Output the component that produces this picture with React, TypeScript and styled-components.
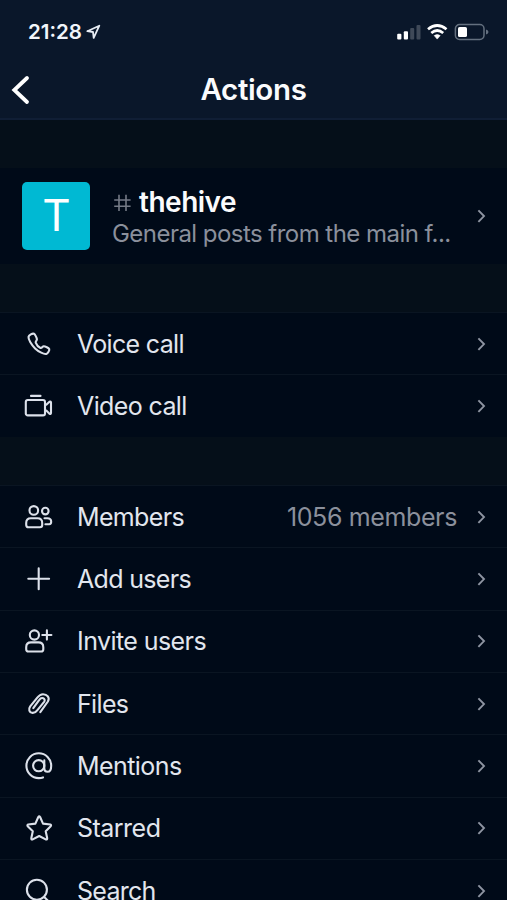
import React from 'react';
import styled, { createGlobalStyle } from 'styled-components';

const GlobalStyle = createGlobalStyle`
  * { box-sizing: border-box; }
  html, body { margin: 0; background: #000a18; }
  body { font-family: Inter, "Liberation Sans", sans-serif; overflow: hidden; }
`;

const Screen = styled.main`
  width: 507px;
  height: 900px;
  overflow: hidden;
  display: flex;
  flex-direction: column;
  background: #000a18;
`;

const Header = styled.header`
  height: 120px;
  flex: none;
  background: #0a172a;
  border-bottom: 2px solid #101e35;
`;

const StatusBar = styled.div`
  height: 60px;
  padding: 4px 18px 0 28px;
  display: flex;
  align-items: center;
  justify-content: space-between;
`;

const Clock = styled.div`
  display: flex;
  align-items: center;
  gap: 4px;
  color: #f2f5fa;
  font-size: 20.5px;
  font-weight: 600;
  letter-spacing: 0;
  line-height: 24px;
`;

const NavBar = styled.div`
  height: 60px;
  padding-left: 10px;
  display: grid;
  grid-template-columns: 22px 1fr 32px;
  align-items: center;
`;

const BackButton = styled.button`
  padding: 0;
  border: 0;
  background: none;
  display: flex;
`;

const Title = styled.h1`
  margin: 0;
  padding-bottom: 2px;
  text-align: center;
  color: #fafbfd;
  font-size: 29.5px;
  font-weight: 600;
  line-height: 36px;
  letter-spacing: -0.35px;
`;

const Spacer = styled.div<{ $height: number }>`
  height: ${(p) => p.$height}px;
  flex: none;
  background: #050f19;
`;

const Profile = styled.section`
  height: 96px;
  flex: none;
  padding: 0 20px 0 22px;
  display: flex;
  align-items: center;
`;

const Avatar = styled.div`
  width: 68px;
  height: 68px;
  flex: none;
  border-radius: 5px;
  background: #00b9d3;
  color: #fff;
  display: flex;
  align-items: center;
  justify-content: center;
  font-size: 44px;
  line-height: 66px;
  padding: 0 0 2px 1px;
`;

const ProfileText = styled.div`
  flex: 1;
  margin-left: 22px;
  padding-top: 4px;
`;

const ChannelName = styled.div`
  display: flex;
  align-items: center;
  gap: 7px;
  height: 32px;
  color: #fafbfd;
  font-size: 28px;
  font-weight: 600;
  letter-spacing: -0.5px;
  line-height: 32px;
`;

const Description = styled.div`
  color: #8b909c;
  font-size: 24px;
  line-height: 32px;
  letter-spacing: -0.54px;
  white-space: nowrap;
`;

const List = styled.ul`
  margin: 0;
  padding: 0;
  list-style: none;
  flex: none;
`;

const Row = styled.li`
  height: 62.3px;
  padding: 0 20px 0 23px;
  display: flex;
  align-items: center;
  border-top: 1px solid #0a1522;
`;

const Label = styled.span<{ $spacing: number }>`
  flex: 1;
  margin-left: 22px;
  color: #e2e6ee;
  font-size: 25px;
  line-height: 32px;
  letter-spacing: ${(p) => p.$spacing}px;
  white-space: nowrap;
`;

const Value = styled.span`
  margin-right: 20px;
  color: #8b909c;
  font-size: 25px;
  line-height: 32px;
  letter-spacing: -0.37px;
`;

const LineIcon = styled.svg`
  width: 32px;
  height: 32px;
  flex: none;
  fill: none;
  stroke: #dce1ea;
  stroke-width: 2.1;
  stroke-linecap: round;
  stroke-linejoin: round;
`;

const ChevronIcon = styled.svg`
  width: 10px;
  height: 16px;
  flex: none;
  fill: none;
  stroke: #8e95a2;
  stroke-width: 1.9;
`;

const Chevron = () => (
  <ChevronIcon viewBox="0 0 10 16">
    <path d="M1.4 2.3 7 8.1 1.4 13.9" />
  </ChevronIcon>
);

const icons = {
  phone: (
    <path d="M11 5.8 C12.1 6.3 13.7 9.7 13.9 11.2 C14 12.6 12.3 13.3 12.7 14.7 C13.4 16.7 15.8 19.2 17.5 20 C18.9 20.5 19.3 18.3 20.8 18.3 C22.3 18.3 25.6 20 26.2 21 C26.7 22.3 24.9 25.4 23.3 25.9 C21.2 26.6 15.6 23.7 12.1 20.4 C8.5 16.9 5.2 11.4 5.5 8.9 C5.8 7 9.5 5.1 11 5.8Z" />
  ),
  video: (
    <>
      <path d="M8 5.9H17.5" />
      <rect x="2.8" y="10" width="19.2" height="15.4" rx="2" />
      <path d="M22 14.8H23.3L26.5 11.7 Q28 11 28 12.6V22.8 Q28 24.4 26.5 23.7L23.3 20.6H22" />
    </>
  ),
  members: (
    <>
      <circle cx="10.8" cy="9.4" r="4.3" />
      <circle cx="22.3" cy="10.1" r="3.3" />
      <path d="M7.8 17.3H14.5Q19.2 17.3 19.2 22V24Q19.2 26.2 17 26.2H5.4Q3.2 26.2 3.2 24V22Q3.2 17.3 7.8 17.3Z" />
      <path d="M21.5 17.3H24.3Q28.2 17.3 28.2 20.8Q28.2 23.2 26.2 23.2H22.4" />
    </>
  ),
  plus: <path d="M5.3 15.8H26.1M15.7 5.4V26.2" />,
  invite: (
    <>
      <circle cx="11.4" cy="10" r="4.6" />
      <path d="M8 17.4H15.4Q20.3 17.4 20.3 22.2V24.2Q20.3 26.5 18 26.5H5.5Q3.2 26.5 3.2 24.2V22.2Q3.2 17.4 8 17.4Z" />
      <path d="M19.3 10H28.4M23.9 5.4V14.6" />
    </>
  ),
  clip: (
    <path d="M17.3 24.1 24.9 13.5C27.1 9.8 24.2 6.2 20 6.2C17.4 6.2 15.8 7.7 14.3 9.6L7.2 18.3C5.3 21 6 24.7 9.6 24.9C12 25 13.3 23.8 14.4 22.2L21.3 13.6C22.7 11.3 20.4 9.3 18.1 10.2C17 10.8 16.4 11.7 15.7 12.6L10.3 20.1" />
  ),
  at: (
    <>
      <circle cx="15.7" cy="15.7" r="5.6" />
      <path d="M21.3 10.4V18C21.3 20.1 22.4 21.8 24.6 21.8C27.3 21.8 28.2 19 28.2 15.7A12.4 12.4 0 1 0 15.8 28.1Q18.1 28.1 20 27.4" />
    </>
  ),
  star: (
    <path d="M15.3 5Q16.2 3.7 17.1 5L20 11.6 27.3 12.5Q28.6 13 27.7 14.2L22.7 19.2 24.2 26.2Q24.2 27.9 22.7 27.4L16.2 24 9.7 27.4Q8.1 27.9 8.3 26.2L9.8 19.2 4.7 14.2Q3.9 13 5.2 12.5L12.4 11.6Z" />
  ),
  search: (
    <>
      <circle cx="13.9" cy="14.7" r="10" />
      <path d="M21.2 22 27.4 28.2" />
    </>
  ),
};

type Item = { icon: keyof typeof icons; label: string; spacing: number; value?: string };

const calls: Item[] = [
  { icon: 'phone', label: 'Voice call', spacing: -0.68 },
  { icon: 'video', label: 'Video call', spacing: -0.62 },
];

const actions: Item[] = [
  { icon: 'members', label: 'Members', spacing: -0.65, value: '1056 members' },
  { icon: 'plus', label: 'Add users', spacing: -0.68 },
  { icon: 'invite', label: 'Invite users', spacing: -0.57 },
  { icon: 'clip', label: 'Files', spacing: -0.65 },
  { icon: 'at', label: 'Mentions', spacing: -0.57 },
  { icon: 'star', label: 'Starred', spacing: -0.52 },
  { icon: 'search', label: 'Search', spacing: -0.72 },
];

const ActionList = ({ items }: { items: Item[] }) => (
  <List>
    {items.map((item) => (
      <Row key={item.label}>
        <LineIcon viewBox="0 0 32 32">{icons[item.icon]}</LineIcon>
        <Label $spacing={item.spacing}>{item.label}</Label>
        {item.value && <Value>{item.value}</Value>}
        <Chevron />
      </Row>
    ))}
  </List>
);

const StatusIcons = () => (
  <svg width="92" height="18" viewBox="0 0 92 18">
    <g fill="#fff">
      <rect x="0.2" y="10.8" width="4.2" height="5.6" rx="1" />
      <rect x="6.8" y="8.2" width="4.2" height="8.2" rx="1" />
      <rect x="13.2" y="5" width="4" height="11.4" rx="1" opacity="0.22" />
      <rect x="19.5" y="2" width="4" height="14.4" rx="1" opacity="0.22" />
      <path d="M37.2 12.6Q40.2 10.6 43.2 12.6L40.2 16.1Z" stroke="#fff" strokeWidth="0.6" strokeLinejoin="round" />
      <rect x="61" y="4" width="9" height="10" rx="1.6" />
    </g>
    <g fill="none" stroke="#fff" strokeWidth="2.7">
      <path d="M31 6.3Q40.2 -1.3 49.5 6.3" />
      <path d="M34.3 10Q40.2 5 46.2 10" />
    </g>
    <rect x="58.4" y="1.6" width="28.6" height="14.8" rx="4.2" fill="none" stroke="#64707f" strokeWidth="1.5" />
    <path d="M89 6.5Q91.5 7.3 91.5 9T89 11.5Z" fill="#64707f" />
  </svg>
);

export default function App() {
  return (
    <>
      <GlobalStyle />
      <Screen>
        <Header>
          <StatusBar>
            <Clock>
              21:28
              <svg width="15" height="16" viewBox="0 0 15 16">
                <path d="M1.3 7.2 13.3 1.7 7.7 13.9 7 8Z" fill="none" stroke="#e8edf4" strokeWidth="1.8" strokeLinejoin="round" />
              </svg>
            </Clock>
            <StatusIcons />
          </StatusBar>
          <NavBar>
            <BackButton aria-label="Back">
              <svg width="22" height="32" viewBox="0 0 22 32">
                <path d="M17 4 4.3 16 17 28" fill="none" stroke="#fff" strokeWidth="3.8" strokeLinecap="round" />
              </svg>
            </BackButton>
            <Title>Actions</Title>
          </NavBar>
        </Header>
        <Spacer $height={48} />
        <Profile>
          <Avatar>T</Avatar>
          <ProfileText>
            <ChannelName>
              <svg width="20" height="20" viewBox="0 0 20 20">
                <path d="M2.2 8H18.6M2.2 14.2H18.6M7 2.8V19M14 2.8V19" fill="none" stroke="#747a86" strokeWidth="1.6" />
              </svg>
              thehive
            </ChannelName>
            <Description>General posts from the main f...</Description>
          </ProfileText>
          <Chevron />
        </Profile>
        <Spacer $height={48} />
        <ActionList items={calls} />
        <Spacer $height={48.5} />
        <ActionList items={actions} />
      </Screen>
    </>
  );
}
